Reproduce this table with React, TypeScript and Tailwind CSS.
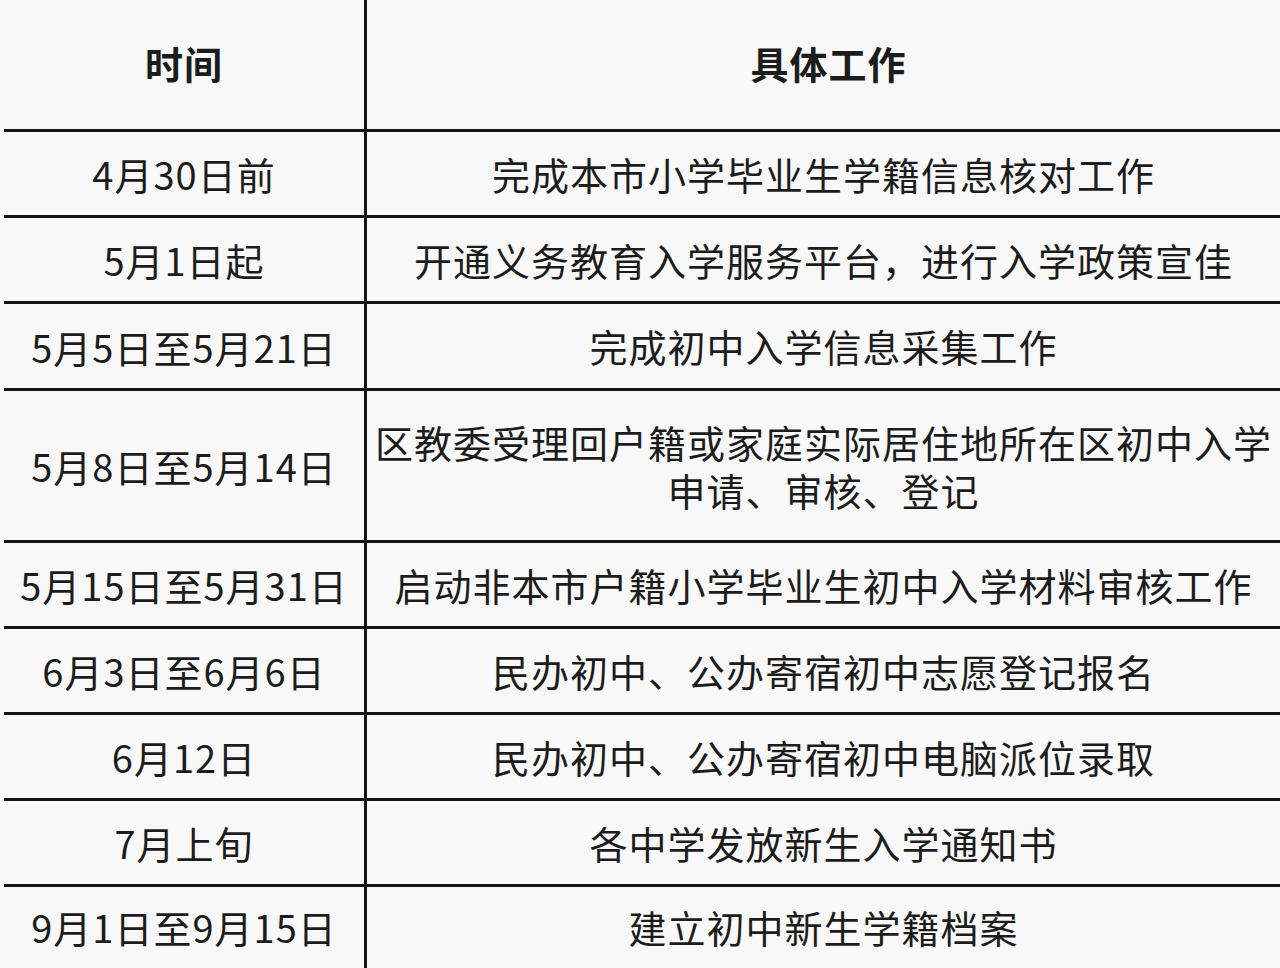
const rows: { time: string; work: string[]; h: string }[] = [
  { time: "4月30日前", work: ["完成本市小学毕业生学籍信息核对工作"], h: "h-[86px]" },
  { time: "5月1日起", work: ["开通义务教育入学服务平台，进行入学政策宣佳"], h: "h-[86px]" },
  { time: "5月5日至5月21日", work: ["完成初中入学信息采集工作"], h: "h-[87px]" },
  {
    time: "5月8日至5月14日",
    work: ["区教委受理回户籍或家庭实际居住地所在区初中入学", "申请、审核、登记"],
    h: "h-[152px]",
  },
  { time: "5月15日至5月31日", work: ["启动非本市户籍小学毕业生初中入学材料审核工作"], h: "h-[86px]" },
  { time: "6月3日至6月6日", work: ["民办初中、公办寄宿初中志愿登记报名"], h: "h-[86px]" },
  { time: "6月12日", work: ["民办初中、公办寄宿初中电脑派位录取"], h: "h-[86px]" },
  { time: "7月上旬", work: ["各中学发放新生入学通知书"], h: "h-[86px]" },
];

export default function App() {
  return (
    <main
      className="w-[1280px] h-[968px] overflow-hidden bg-[#f8f8f8] text-[#1c1c1c] pl-1"
      style={{ fontFamily: '"Noto Sans CJK SC", "Noto Sans", sans-serif' }}
    >
      <div className="flex flex-col">
        {/* header */}
        <div className="flex h-[132px] border-b-[3px] border-[#151515]">
          <div className="w-[363px] border-r-[3px] border-[#151515] flex items-center justify-center text-[38px] font-bold tracking-[1px] pb-1">
            时间
          </div>
          <div className="flex-1 flex items-center justify-center text-[38px] font-bold tracking-[1px] pb-1 pl-[10px]">
            具体工作
          </div>
        </div>

        {rows.map((r) => (
          <div key={r.time} className={`flex ${r.h} border-b-[3px] border-[#151515]`}>
            <div className="w-[363px] border-r-[3px] border-[#151515] flex items-center justify-center text-[38px] tracking-[1px] whitespace-nowrap">
              {r.time}
            </div>
            <div className="flex-1 flex flex-col items-center justify-center text-[38px] tracking-[1px] leading-[48px] whitespace-nowrap">
              {r.work.map((w) => (
                <span key={w}>{w}</span>
              ))}
            </div>
          </div>
        ))}

        <div className="flex h-[90px]">
          <div className="w-[363px] border-r-[3px] border-[#151515] flex items-center justify-center text-[38px] tracking-[1px] whitespace-nowrap pb-3">
            9月1日至9月15日
          </div>
          <div className="flex-1 flex items-center justify-center text-[38px] tracking-[1px] whitespace-nowrap pb-3">
            建立初中新生学籍档案
          </div>
        </div>
      </div>
    </main>
  );
}
